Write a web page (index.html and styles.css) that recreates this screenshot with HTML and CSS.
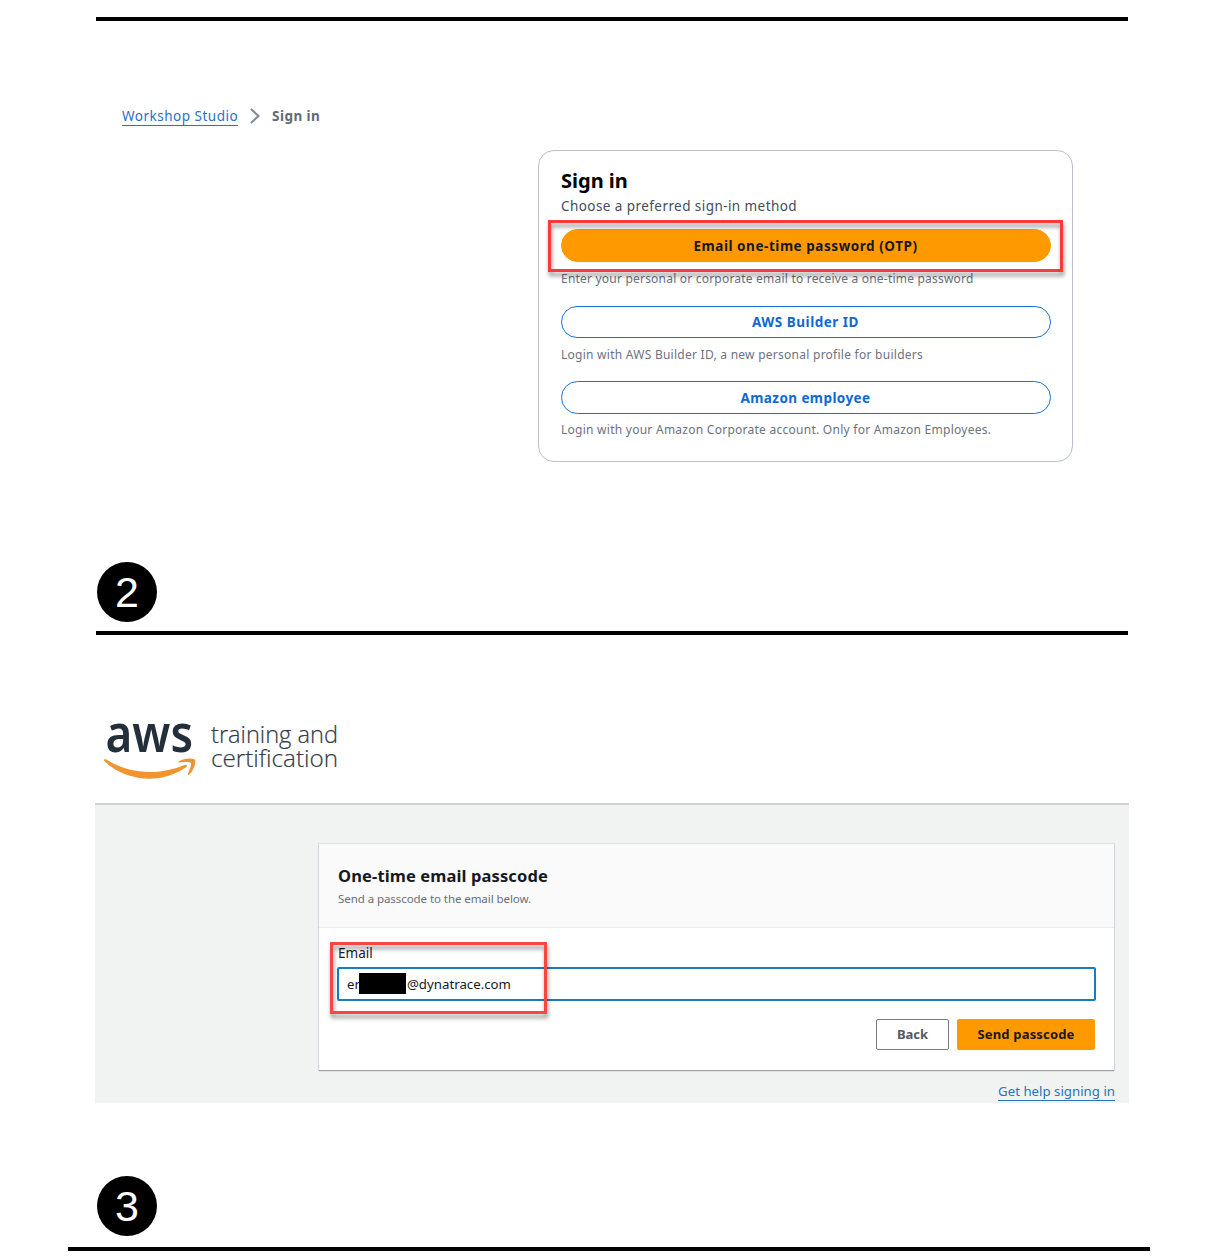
FILE: index.html
```html
<!DOCTYPE html>
<html lang="en">
<head>
<meta charset="utf-8">
<title>Sign in guide</title>
<link rel="stylesheet" href="styles.css">
</head>
<body>
<main class="guide">
  <hr class="rule">
  <section class="step-signin">
    <nav class="breadcrumb">
      <a class="crumb">Workshop Studio</a>
      <svg class="chevron" width="10" height="16" viewBox="0 0 10 16"><path d="M1 1l7.500 7L1 15"/></svg>
      <span class="current">Sign in</span>
    </nav>
    <div class="signin-card">
      <h1>Sign in</h1>
      <p class="lead">Choose a preferred sign-in method</p>
      <div class="btn primary">Email one-time password (OTP)</div>
      <p class="hint hint-otp">Enter your personal or corporate email to receive a one-time password</p>
      <div class="btn short">AWS Builder ID</div>
      <p class="hint">Login with AWS Builder ID, a new personal profile for builders</p>
      <div class="btn employee">Amazon employee</div>
      <p class="hint hint-employee">Login with your Amazon Corporate account. Only for Amazon Employees.</p>
      <div class="marker marker-otp"></div>
    </div>
  </section>

  <div class="step-number">2</div>
  <hr class="rule">

  <section class="step-passcode">
    <svg class="logo" width="240" height="62" viewBox="0 0 240 62">
      <text class="logo-aws" x="1.500" y="32" textLength="87.500" lengthAdjust="spacingAndGlyphs">aws</text>
      <path class="smile" d="M.3 39.500C-.2 40.200 0 40.800.8 41.500C12 52 28 58.700 45.500 58.700C58 58.700 72 54.500 82 47.300C84 46 82.500 44 80.300 44.900C69 49.700 57 52 46 52C30 52 15 47.500 2.300 39.600C1.500 39 .8 39 .3 39.500Z"/>
      <path class="smile" d="M74.600 41.600C79 38.500 86 37.700 90.300 39.200C92.700 40.200 90.500 50 85.300 54.500C84.300 55.300 83.500 54.800 84 53.700C85.200 50.500 88 44.500 86.800 43C85.500 41.500 79 42 75.500 42.500C74.300 42.700 73.800 42.200 74.600 41.600Z"/>
      <text class="logo-sub" x="107" y="22.500" textLength="127" lengthAdjust="spacingAndGlyphs">training and</text>
      <text class="logo-sub" x="107" y="47" textLength="127" lengthAdjust="spacingAndGlyphs">certification</text>
    </svg>
    <div class="panel">
      <div class="otp-card">
        <header>
          <h2>One-time email passcode</h2>
          <p>Send a passcode to the email below.</p>
        </header>
        <div class="form">
          <label>Email</label>
          <div class="field"><span>er</span><i class="redacted"></i><span class="mail">@dynatrace.com</span></div>
          <div class="actions">
            <div class="action back">Back</div>
            <div class="action send">Send passcode</div>
          </div>
        </div>
        <div class="marker marker-email"></div>
      </div>
      <p class="help"><a>Get help signing in</a></p>
    </div>
  </section>

  <div class="step-number last">3</div>
  <hr class="rule wide">
</main>
</body>
</html>
```
FILE: styles.css
```css
* { box-sizing: border-box; }
body { margin: 0; background: #fff; color: #000; font-family: "Noto Sans", sans-serif; font-size: 13px; white-space: nowrap; }
h1, h2, p { margin: 0; }
.guide { width: 1220px; height: 1259px; overflow: hidden; padding: 17px 92px 0 96px; }
.rule { height: 4px; margin: 0; border: 0; background: #000; }
.rule.wide { margin: 11px -22px 0 -28px; }

.step-signin { height: 541px; padding: 85px 55px 0 26px; }
.breadcrumb { display: flex; align-items: center; height: 20px; gap: 12px; line-height: 20px; }
.crumb { color: #2a6fd0; box-shadow: inset 0 -1px #2a6fd0; height: 20px; font-size: 13.5px; letter-spacing: .5px; }
.current { color: #5f6b7a; font-weight: 700; font-size: 13.5px; letter-spacing: .42px; }
.chevron { fill: none; stroke: #7d8998; stroke-width: 2; }
.signin-card { position: relative; width: 535px; height: 312px; margin: 24px 0 0 auto; padding: 16px 21px 20px; border: 1px solid #b9c0cc; border-radius: 16px; }
h1 { padding-left: 1px; font-size: 20px; line-height: 28px; font-weight: 700; }
.lead { margin-top: 1px; padding-left: 1px; line-height: 21px; font-size: 13.5px; letter-spacing: .43px; color: #414d5c; }
.btn { display: flex; align-items: center; justify-content: center; height: 33px; width: 490px; margin: 16px 0 0 .5px; border: 1px solid #1674d8; border-radius: 17px; color: #0f68d4; font-size: 13.5px; letter-spacing: .51px; font-weight: 700; }
.btn.short { height: 32px; margin-top: 17px; }
.btn.employee { letter-spacing: .42px; }
.btn.primary { margin-top: 12px; background: #f90; border-color: #f90; color: #16191f; letter-spacing: .55px; }
.hint { margin-top: 6px; padding-left: 1px; font-size: 12px; line-height: 21px; letter-spacing: .258px; color: #6b7280; }
.hint-otp { letter-spacing: .208px; }
.hint-employee { line-height: 20px; }
.marker { position: absolute; border: 3px solid #f93a3a; filter: drop-shadow(1px 4px 2px rgba(0, 0, 0, .42)); }
.marker-otp { left: 9px; top: 69px; width: 515px; height: 52px; }

.step-number { width: 60px; height: 60px; margin: 0 0 9px 1px; border-radius: 50%; background: #000; color: #fff; font: 43px/61px "Liberation Sans", sans-serif; text-align: center; }
.step-number.last { margin: 73px 0 0 1px; }

.step-passcode { margin: 0 -1px; padding-top: 85px; }
.logo { display: block; margin: 0 0 21px 9px; overflow: visible; }
.logo-aws { font: 600 52px "Noto Sans", sans-serif; fill: #232f3a; }
.logo-sub { font: 300 24px "Open Sans", sans-serif; fill: #333b49; stroke: #333b49; stroke-width: .2px; }
.smile { fill: #f1942f; }
.panel { height: 300px; padding: 39px 15px 0 224px; border-top: 2px solid #d0d4d4; background: #f1f3f3; }
.otp-card { position: relative; height: 226px; background: #fff; box-shadow: 0 1px 1px #9aa0a4, 0 0 1px 1px #e0e3e4; }
.otp-card header { height: 84px; padding: 21px 19px 0; background: #fafafa; border-bottom: 1px solid #eaeded; }
h2 { font-size: 16.5px; line-height: 22px; letter-spacing: .12px; color: #16191f; }
header p { margin-top: 2px; font-size: 11.5px; line-height: 20px; letter-spacing: -.067px; color: #687078; }
.form { padding: 14px 19px 0 18px; }
label { display: block; padding-left: 1px; font-size: 13.5px; line-height: 22px; color: #16191f; }
.field { display: flex; align-items: center; height: 34px; margin: 3px -1px 0 0; padding: 0 0 1px 8px; border: 2px solid #1a7bbf; border-radius: 2px; color: #16191f; }
.field, .help { font-size: 13.25px; }
.redacted { width: 47px; height: 21px; background: #000; margin: 0 1px 0 -1px; }
.actions { display: flex; justify-content: flex-end; gap: 8px; margin-top: 18px; }
.action { display: flex; align-items: center; justify-content: center; height: 31px; padding-bottom: 1px; border: 1px solid #777d88; border-radius: 2px; font-weight: 700; color: #545b64; }
.back { width: 73px; }
.send { width: 138px; border-color: #f90; background: #f90; color: #16191f; letter-spacing: .166px; }
.marker-email { left: 11px; top: 98px; width: 217px; height: 72px; border-color: #fa4545; }
.help { margin-top: 11px; line-height: 20px; text-align: right; margin-right: -1px; }
.help a { display: inline-block; color: #2a73b8; box-shadow: inset 0 -1px #2a73b8; }
```
